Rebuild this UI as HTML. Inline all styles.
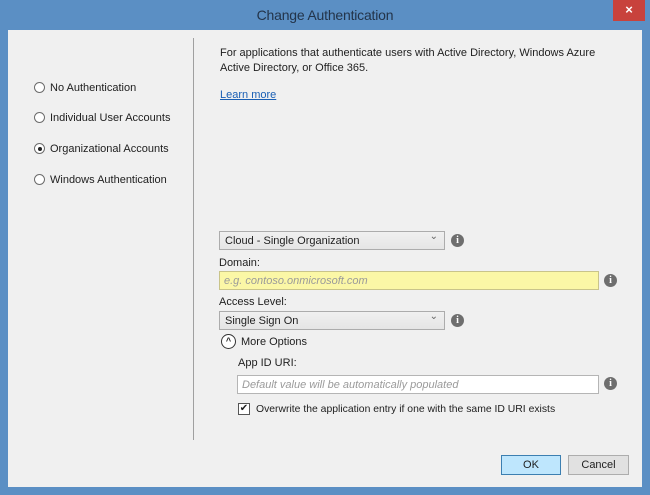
<!DOCTYPE html>
<html><head><style>
*{box-sizing:border-box;margin:0;padding:0}
body{width:650px;height:495px;background:#5b8fc4;font-family:"Liberation Sans",sans-serif;font-size:11px;color:#1e1e1e;position:relative;overflow:hidden}
.a{position:absolute;white-space:nowrap}
.title{left:0;width:650px;top:7px;text-align:center;font-size:14px;color:#23344a;font-weight:normal;letter-spacing:-0.2px}
.close{left:613px;top:0;width:32px;height:21px;background:#c8423c;color:#fff;text-align:center;font-size:13px;line-height:20px;font-weight:bold}
.client{left:8px;top:30px;width:634px;height:457px;background:#f0f0f0}
.radio{width:11px;height:11px;border:1px solid #6c6c6c;border-radius:50%;background:#fff}
.radio.on::after{content:"";position:absolute;left:2.5px;top:2.5px;width:4px;height:4px;border-radius:50%;background:#222}
.dd{height:19px;border:1px solid #acacac;background:linear-gradient(#f0f0f0,#e5e5e5);padding:3px 0 0 5px}
.dd::after{content:"⌄";position:absolute;right:6px;top:-1px;font-size:10px;color:#666}
.info{width:13px;height:13px;border-radius:50%;background:#6e6e6e;color:#fff;font-weight:bold;font-size:10px;text-align:center;line-height:13px;font-family:"Liberation Serif",serif}
.inp{height:19px;border:1px solid #b5b5b5;padding:3px 0 0 4px;font-style:italic;color:#9a9a9a}
.btn{height:20px;border:1px solid #adadad;background:#e1e1e1;text-align:center;padding-top:3px}
</style></head><body>
<div class="a title">Change Authentication</div>
<div class="a close">×</div>
<div class="a client"></div>
<div class="a" style="left:193px;top:38px;width:1px;height:402px;background:#a0a0a0"></div>

<div class="a radio" style="left:34px;top:82px"></div><div class="a" style="left:50px;top:82px">No Authentication</div>
<div class="a radio" style="left:34px;top:112px"></div><div class="a" style="left:50px;top:112px">Individual User Accounts</div>
<div class="a radio on" style="left:34px;top:143px"></div><div class="a" style="left:50px;top:143px">Organizational Accounts</div>
<div class="a radio" style="left:34px;top:174px"></div><div class="a" style="left:50px;top:174px">Windows Authentication</div>

<div class="a" style="left:220px;top:47px">For applications that authenticate users with Active Directory, Windows Azure</div>
<div class="a" style="left:220px;top:62px">Active Directory, or Office 365.</div>
<div class="a" style="left:220px;top:89px;color:#1a5fb4;text-decoration:underline">Learn more</div>

<div class="a dd" style="left:219px;top:231px;width:226px">Cloud - Single Organization</div>
<div class="a info" style="left:451px;top:234px">i</div>
<div class="a" style="left:219px;top:257px">Domain:</div>
<div class="a inp" style="left:219px;top:271px;width:380px;background:#fbf7a6;border-color:#c9c48a">e.g. contoso.onmicrosoft.com</div>
<div class="a info" style="left:604px;top:274px">i</div>
<div class="a" style="left:219px;top:296px">Access Level:</div>
<div class="a dd" style="left:219px;top:311px;width:226px">Single Sign On</div>
<div class="a info" style="left:451px;top:314px">i</div>
<div class="a" style="left:221px;top:334px;width:15px;height:15px;border:1px solid #333;border-radius:50%;background:#fff;text-align:center;font-size:9px;line-height:13px;font-weight:bold">^</div>
<div class="a" style="left:241px;top:336px">More Options</div>
<div class="a" style="left:238px;top:357px">App ID URI:</div>
<div class="a inp" style="left:237px;top:375px;width:362px;background:#fff">Default value will be automatically populated</div>
<div class="a info" style="left:604px;top:377px">i</div>
<div class="a" style="left:238px;top:403px;width:12px;height:12px;border:1px solid #555;background:#fff;font-size:10px;line-height:10px;text-align:center">✔</div>
<div class="a" style="left:256px;top:404px;font-size:10.4px">Overwrite the application entry if one with the same ID URI exists</div>

<div class="a btn" style="left:501px;top:455px;width:60px;background:#bee6fd;border-color:#3c7fb1">OK</div>
<div class="a btn" style="left:568px;top:455px;width:61px">Cancel</div>
</body></html>
